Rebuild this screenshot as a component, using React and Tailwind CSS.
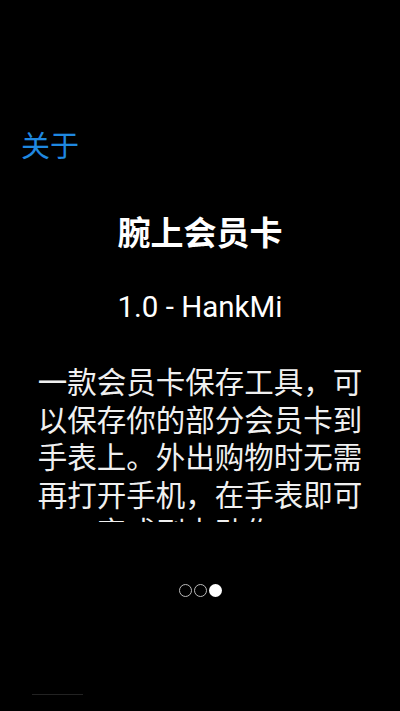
export default function App() {
  return (
    <div
      className="w-[400px] h-[711px] bg-black flex flex-col overflow-hidden"
      style={{ fontFamily: '"Noto Sans CJK SC", "Noto Sans", sans-serif' }}
    >
      <div className="h-[124px]" />
      <div className="px-[21px] text-[29px] leading-[40px] text-[#1f88e0]">关于</div>

      <div className="mt-[47px] text-center text-[33px] leading-[40px] font-bold text-white">
        腕上会员卡
      </div>

      <div
        className="mt-[38px] text-center text-[29.5px] leading-[36px] text-white"
        style={{ fontFamily: 'Roboto, "Noto Sans", sans-serif' }}
      >
        1.0 - HankMi
      </div>

      <div className="mt-[37px] h-[160px] overflow-hidden">
        <p className="px-[34px] text-center text-[29.5px] leading-[37.5px] text-[#f0f0f0]">
          一款会员卡保存工具，可以保存你的部分会员卡到手表上。外出购物时无需再打开手机，在手表即可完成刷卡动作。
        </p>
      </div>

      <div className="mt-[62px] flex justify-center gap-[2px]">
        <span className="w-[13px] h-[13px] rounded-full border-[1.5px] border-[#bbbbbb]" />
        <span className="w-[13px] h-[13px] rounded-full border-[1.5px] border-[#bbbbbb]" />
        <span className="w-[13px] h-[13px] rounded-full bg-white" />
      </div>

      <div className="flex-1" />
      <div className="ml-[32px] mb-[16px] w-[51px] h-[1px] bg-[#222222]" />
    </div>
  );
}
